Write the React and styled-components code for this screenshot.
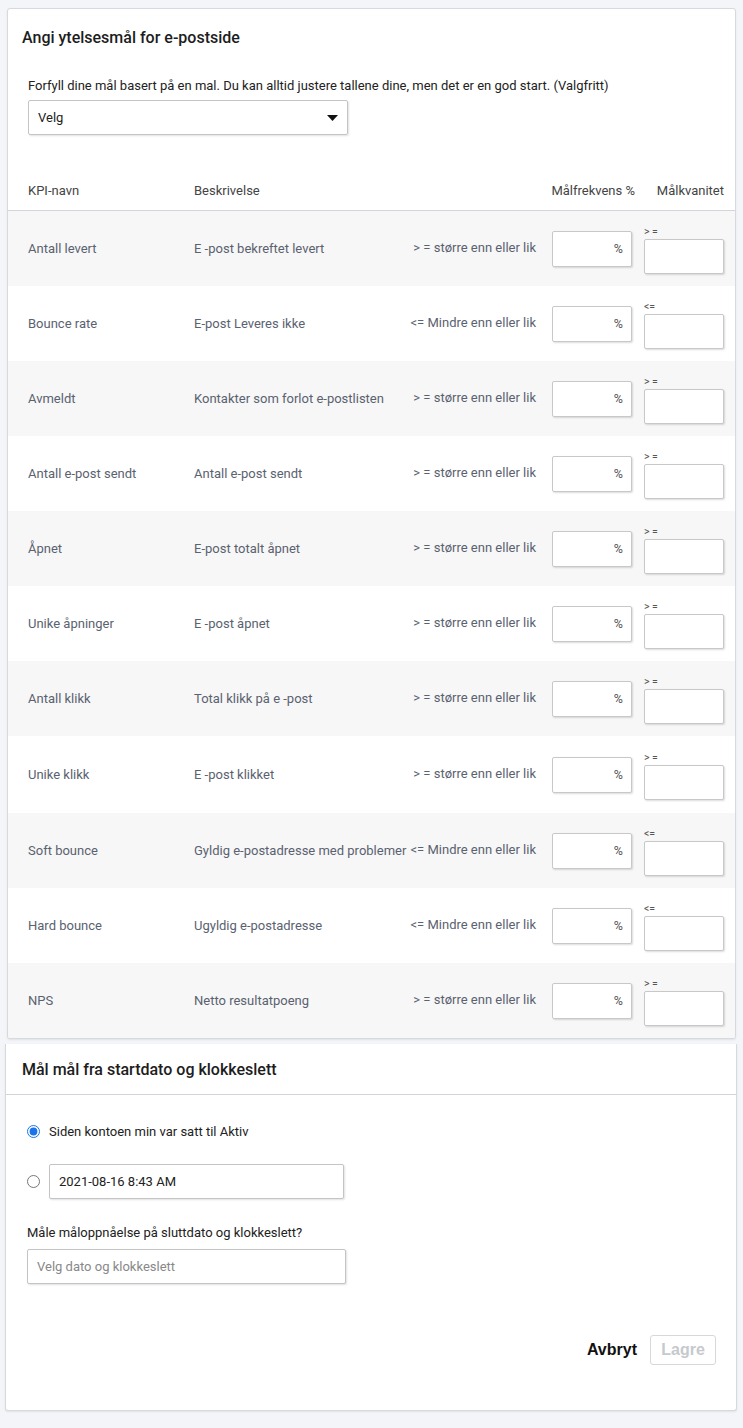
import React, { useState } from "react";
import styled, { createGlobalStyle } from "styled-components";

const GlobalStyle = createGlobalStyle`
  body {
    margin: 0;
    background: #f3f5f8;
    font-family: Roboto, "Noto Sans", Arial, sans-serif;
    color: #222;
  }
`;

const Page = styled.div`
  padding-top: 8px;
  padding-bottom: 18px;
`;

const Card = styled.section`
  background: #fff;
  border: 1px solid #d6d9dd;
  border-radius: 3px;
  box-shadow: 0 1px 2px rgba(0, 0, 0, 0.08);
  margin: ${(p) => (p.$second ? "5px 6px 0 5px" : "0 7px 0 7px")};
  ${(p) => p.$second && "border-top: none; border-radius: 0 0 3px 3px;"}
  overflow: hidden;
`;

const Title = styled.h2`
  margin: 0;
  font-size: 16px;
  font-weight: 500;
  line-height: 20px;
  color: #1d1d1d;
  padding: 19px 14px 0;
`;

const Intro = styled.p`
  margin: 0;
  padding: 30px 20px 0;
  font-size: 13px;
  line-height: 16px;
  color: #222;
`;

const SelectBox = styled.div`
  margin: 6px 0 0 20px;
  width: 320px;
  height: 35px;
  box-sizing: border-box;
  display: flex;
  align-items: center;
  justify-content: space-between;
  padding: 0 9px;
  border: 1px solid #c4c4c4;
  border-radius: 2px;
  box-shadow: 1px 1px 2px rgba(0, 0, 0, 0.12);
  font-size: 13px;
  color: #222;
`;

/////////////////////////////////////////////////////////// TABLE

const Grid = styled.div`
  display: grid;
  grid-template-columns: 166px 1fr auto 96px 92px;
  align-items: center;
  padding: 0 11px 0 20px;
`;

const HeadRow = styled(Grid)`
  margin-top: 48px;
  height: 27px;
  align-items: start;
  border-bottom: 1px solid #d2d5da;
  font-size: 13px;
  line-height: 15px;
  color: #444;
`;

const HeadCell = styled.div`
  text-align: ${(p) => (p.$right ? "right" : "left")};
  white-space: nowrap;
  ${(p) => p.$push && "margin-right: -3px;"}
`;

const Row = styled(Grid)`
  height: ${(p) => (p.$tall ? 77 : 75)}px;
  background: ${(p) => (p.$shade ? "#f7f7f7" : "#fff")};
  font-size: 13px;
  color: #5a6270;
`;

const Compare = styled.div`
  text-align: right;
  margin-top: -3px;
  white-space: nowrap;
`;

const PercentBox = styled.div`
  justify-self: end;
  width: 80px;
  height: 36px;
  box-sizing: border-box;
  display: flex;
  align-items: center;
  border: 1px solid #c8c8c8;
  border-radius: 2px;
  background: #fff;
  box-shadow: 1px 1px 2px rgba(0, 0, 0, 0.14);
  padding-right: 8px;
  color: #555;
  font-size: 12.5px;
`;

const BareInput = styled.input`
  flex: 1;
  min-width: 0;
  border: none;
  outline: none;
  background: transparent;
  height: 100%;
  padding: 0 8px;
  font: inherit;
`;

const QualityCell = styled.div`
  justify-self: end;
  width: 80px;
  display: flex;
  flex-direction: column;
  gap: 1px;
  margin-top: 2px;
`;

const Tiny = styled.span`
  font-size: 10.5px;
  line-height: 12px;
  color: #555;
`;

const QualityInput = styled.input`
  width: 80px;
  height: 35px;
  box-sizing: border-box;
  border: 1px solid #c8c8c8;
  border-radius: 2px;
  box-shadow: 1px 1px 2px rgba(0, 0, 0, 0.14);
  outline: none;
`;

/////////////////////////////////////////////////////////// SECOND CARD

const SectionHead = styled.div`
  height: 50px;
  border-bottom: 1px solid #d2d5da;
  display: flex;
  align-items: center;
  padding: 0 16px;
  font-size: 16px;
  font-weight: 500;
  color: #1d1d1d;
`;

const Body = styled.div`
  padding: 29px 21px 0;
  display: flex;
  flex-direction: column;
`;

const RadioRow = styled.label`
  display: flex;
  align-items: center;
  gap: 9px;
  font-size: 13px;
  line-height: 15px;
  color: #222;
  margin-top: ${(p) => p.$top || 0}px;
`;

const Radio = styled.input`
  margin: 0;
  width: 13px;
  height: 13px;
  accent-color: #1a73e8;
`;

const TextInput = styled.input`
  width: ${(p) => p.$w}px;
  height: 35px;
  box-sizing: border-box;
  border: 1px solid #c4c4c4;
  border-radius: 2px;
  box-shadow: 1px 1px 2px rgba(0, 0, 0, 0.12);
  padding: 0 9px;
  font-family: Roboto, Arial, sans-serif;
  font-size: 13px;
  color: #222;
  outline: none;

  &::placeholder {
    color: #888;
  }
`;

const FieldLabel = styled.div`
  margin-top: 26px;
  margin-bottom: 9px;
  font-size: 13px;
  line-height: 15px;
  color: #222;
`;

const Actions = styled.div`
  display: flex;
  justify-content: flex-end;
  align-items: center;
  gap: 13px;
  padding: 51px 20px 45px;
`;

const LinkButton = styled.button`
  border: none;
  background: none;
  padding: 0;
  font-family: "Liberation Sans", Arial, sans-serif;
  font-weight: bold;
  font-size: 16px;
  color: #111;
  cursor: pointer;
`;

const SaveButton = styled.button`
  width: 66px;
  height: 30px;
  border: 1px solid #d6d9dc;
  border-radius: 3px;
  background: #fff;
  font-family: "Liberation Sans", Arial, sans-serif;
  font-weight: bold;
  font-size: 16px;
  color: #c6c9cd;

  &:disabled {
    cursor: not-allowed;
  }
`;

///////////////////////////////////////////////////////////

const GE = "> = større enn eller lik";
const LE = "<= Mindre enn eller lik";

const kpis = [
  ["Antall levert", "E -post bekreftet levert", GE, "> ="],
  ["Bounce rate", "E-post Leveres ikke", LE, "<="],
  ["Avmeldt", "Kontakter som forlot e-postlisten", GE, "> ="],
  ["Antall e-post sendt", "Antall e-post sendt", GE, "> ="],
  ["Åpnet", "E-post totalt åpnet", GE, "> ="],
  ["Unike åpninger", "E -post åpnet", GE, "> ="],
  ["Antall klikk", "Total klikk på e -post", GE, "> ="],
  ["Unike klikk", "E -post klikket", GE, "> ="],
  ["Soft bounce", "Gyldig e-postadresse med problemer", LE, "<="],
  ["Hard bounce", "Ugyldig e-postadresse", LE, "<="],
  ["NPS", "Netto resultatpoeng", GE, "> ="],
];

const App = () => {
  const [since, setSince] = useState("active");

  return (
    <Page>
      <GlobalStyle />
      <Card>
        <Title>Angi ytelsesmål for e-postside</Title>
        <Intro>
          Forfyll dine mål basert på en mal. Du kan alltid justere tallene
          dine, men det er en god start. (Valgfritt)
        </Intro>
        <SelectBox>
          <span>Velg</span>
          <svg width="11" height="6" viewBox="0 0 11 6">
            <path d="M0 0h11L5.5 6z" fill="#111" />
          </svg>
        </SelectBox>

        <HeadRow>
          <HeadCell>KPI-navn</HeadCell>
          <HeadCell>Beskrivelse</HeadCell>
          <HeadCell />
          <HeadCell $right $push>
            Målfrekvens %
          </HeadCell>
          <HeadCell $right>Målkvanitet</HeadCell>
        </HeadRow>

        {kpis.map(([name, desc, cmp, sign], i) => (
          <Row key={name} $shade={i % 2 === 0} $tall={i === 7}>
            <div>{name}</div>
            <div>{desc}</div>
            <Compare>{cmp}</Compare>
            <PercentBox>
              <BareInput />%
            </PercentBox>
            <QualityCell>
              <Tiny>{sign}</Tiny>
              <QualityInput />
            </QualityCell>
          </Row>
        ))}
      </Card>

      <Card $second>
        <SectionHead>Mål mål fra startdato og klokkeslett</SectionHead>
        <Body>
          <RadioRow>
            <Radio
              type="radio"
              name="since"
              checked={since === "active"}
              onChange={() => setSince("active")}
            />
            Siden kontoen min var satt til Aktiv
          </RadioRow>
          <RadioRow $top={25}>
            <Radio
              type="radio"
              name="since"
              checked={since === "date"}
              onChange={() => setSince("date")}
            />
            <TextInput $w={295} defaultValue="2021-08-16 8:43 AM" />
          </RadioRow>
          <FieldLabel>Måle måloppnåelse på sluttdato og klokkeslett?</FieldLabel>
          <TextInput $w={319} placeholder="Velg dato og klokkeslett" />
        </Body>
        <Actions>
          <LinkButton type="button">Avbryt</LinkButton>
          <SaveButton type="button" disabled>
            Lagre
          </SaveButton>
        </Actions>
      </Card>
    </Page>
  );
};

export default App;
